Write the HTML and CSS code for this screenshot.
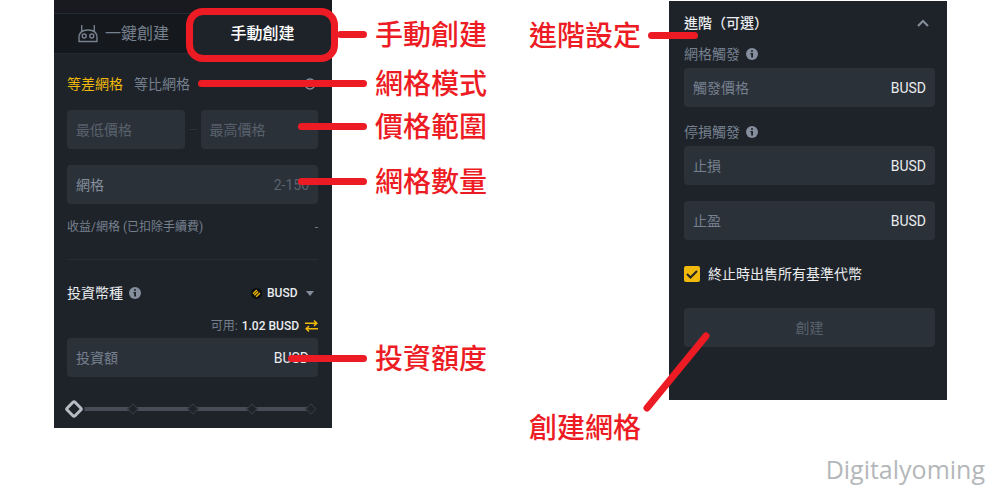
FILE: index.html
```html
<!DOCTYPE html>
<html lang="zh-Hant">
<head>
    <meta charset="UTF-8">
    <meta name="viewport" content="width=device-width, initial-scale=1.0">
    <title>網格交易設定</title>
    <link rel="stylesheet" href="styles.css">
</head>
<body>
    <main>
        <section class="side">
            <form class="panel panel-main">
                <div class="tabs">
                    <button type="button" class="tab">
                        <svg width="20" height="18" viewBox="0 0 20 18" fill="none" stroke="currentColor" stroke-width="1.4">
                            <path d="M3.700 0v7M16.300 0v7M1 16.500v-4c0-5 3.500-7.500 9-7.500s9 2.500 9 7.500v4z"/>
                            <circle cx="6.200" cy="11" r="2"/>
                            <circle cx="13.800" cy="11" r="2"/>
                        </svg>
                        一鍵創建
                    </button>
                    <button type="button" class="tab active">手動創建</button>
                </div>

                <div class="panel-body">
                    <div class="row modes">
                        <button type="button" class="mode active">等差網格</button>
                        <button type="button" class="mode">等比網格</button>
                        <svg class="push" width="16" height="12" viewBox="0 0 16 12" fill="none" stroke="#848e9c" stroke-width="1.5">
                            <circle cx="8" cy="6" r="5"/>
                        </svg>
                    </div>

                    <div class="range">
                        <div class="field dim"><input type="text" placeholder="最低價格" aria-label="最低價格"></div>
                        <span class="dash"></span>
                        <div class="field dim"><input type="text" placeholder="最高價格" aria-label="最高價格"></div>
                    </div>

                    <div class="field count">
                        <label for="grids">網格</label>
                        <input id="grids" type="text" placeholder="2-150">
                    </div>

                    <div class="row profit">
                        <span>收益/網格 (已扣除手續費)</span>
                        <span class="push">-</span>
                    </div>

                    <div class="row coin">
                        <label for="coin">投資幣種</label>
                        <svg class="info" width="12" height="12" viewBox="0 0 12 12">
                            <circle cx="6" cy="6" r="6" fill="#848e9c"/>
                            <path d="M5 2.200h2v1.600H5zM4.400 5H7v4.600H5.200V6.200h-.8z" fill="#1e2329"/>
                        </svg>
                        <svg class="push" width="11" height="11" viewBox="0 0 11 11">
                            <circle cx="5.500" cy="5.500" r="5.500" fill="#0b0e11"/>
                            <path d="M2 5.800l3.800-3.800M3.400 7.200l3.800-3.800M5.200 8.800l3.800-3.800" stroke="#f0b90b" stroke-width="1.4"/>
                        </svg>
                        <select id="coin">
                            <option>BUSD</option>
                        </select>
                        <svg class="caret" width="8" height="5" viewBox="0 0 8 5"><path d="M0 0h8L4 5z" fill="#848e9c"/></svg>
                    </div>

                    <div class="row available">
                        <span class="push">可用:</span>
                        <strong>1.02 BUSD</strong>
                        <svg width="13" height="12" viewBox="0 0 13 12" fill="none" stroke="#f0b90b" stroke-width="1.5">
                            <path d="M0 3.200h11.500M9 .5l2.800 2.700L9 5.900M13 8.800H1.500M4 6.100L1.200 8.800 4 11.500"/>
                        </svg>
                    </div>

                    <div class="field amount">
                        <input id="amount" type="text" placeholder="投資額" aria-label="投資額">
                        <label for="amount">BUSD</label>
                    </div>

                    <div class="slider">
                        <div class="ticks"><i></i><i></i><i></i><i></i><i></i></div>
                        <input type="range" min="0" max="100" value="0" aria-label="投資比例">
                    </div>
                </div>
            </form>

            <div class="notes">
                <p class="note note-tab">手動創建</p>
                <p class="note note-mode">網格模式</p>
                <p class="note note-price">價格範圍</p>
                <p class="note note-count">網格數量</p>
                <p class="note note-amount">投資額度</p>
            </div>
        </section>

        <section class="side">
            <div class="notes notes-right">
                <p class="note note-advanced">進階設定</p>
                <p class="note note-create">
                    創建網格
                    <svg width="72" height="88" viewBox="0 0 72 88"><path d="M65 8L6 80" stroke="#ed1c24" stroke-width="7" stroke-linecap="round"/></svg>
                </p>
            </div>

            <form class="panel panel-advanced">
                <div class="row advanced">
                    <h2>進階（可選）</h2>
                    <svg class="push" width="12" height="8" viewBox="0 0 12 8" fill="none" stroke="#848e9c" stroke-width="2"><path d="M1 7l5-5 5 5"/></svg>
                </div>

                <div class="row trigger">
                    <label for="trigger">網格觸發</label>
                    <svg class="info" width="12" height="12" viewBox="0 0 12 12">
                        <circle cx="6" cy="6" r="6" fill="#848e9c"/>
                        <path d="M5 2.200h2v1.600H5zM4.400 5H7v4.600H5.200V6.200h-.8z" fill="#1e2329"/>
                    </svg>
                </div>
                <div class="field">
                    <input id="trigger" type="text" placeholder="觸發價格">
                    <span>BUSD</span>
                </div>

                <div class="row trigger stop">
                    <label for="stop">停損觸發</label>
                    <svg class="info" width="12" height="12" viewBox="0 0 12 12">
                        <circle cx="6" cy="6" r="6" fill="#848e9c"/>
                        <path d="M5 2.200h2v1.600H5zM4.400 5H7v4.600H5.200V6.200h-.8z" fill="#1e2329"/>
                    </svg>
                </div>
                <div class="field">
                    <input id="stop" type="text" placeholder="止損">
                    <span>BUSD</span>
                </div>
                <div class="field profit-stop">
                    <input type="text" placeholder="止盈" aria-label="止盈">
                    <span>BUSD</span>
                </div>

                <div class="row sell">
                    <span class="check">
                        <input id="sell" type="checkbox" checked>
                        <svg width="16" height="16" viewBox="0 0 16 16" fill="none" stroke="#1e2329" stroke-width="2"><path d="M3 8l3.500 3.500L13 5"/></svg>
                    </span>
                    <label for="sell">終止時出售所有基準代幣</label>
                </div>

                <button type="button" class="create">創建</button>
            </form>
        </section>
    </main>

    <footer>Digitalyoming</footer>
</body>
</html>
```

FILE: styles.css
```css
* {
    box-sizing: border-box;
}

body {
    margin: 0;
    background-color: #fff;
    font-family: Roboto, 'Noto Sans CJK TC', sans-serif;
    font-size: 14px;
    line-height: 20px;
}

h2, p {
    margin: 0;
}

button, input, select {
    font: inherit;
    color: inherit;
    background: none;
    border: 0;
    padding: 0;
    margin: 0;
}

svg {
    flex-shrink: 0;
}

main {
    display: flex;
    justify-content: space-between;
    padding: 0 53px 0 54px;
}

.side {
    display: flex;
    align-items: flex-start;
}

/* panels */
.panel {
    width: 278px;
    background-color: #1e2329;
    color: #eaecef;
}

.panel-main {
    border-top: 13px solid #181a20;
    padding-bottom: 9px;
}

.panel-body {
    padding: 0 14px 0 13px;
}

.panel-advanced {
    margin-top: 1px;
    padding: 12px 12px 53px 15px;
}

.row {
    display: flex;
    align-items: center;
    height: 20px;
}

.push {
    margin-left: auto;
}

.info {
    margin-left: 6px;
}

.tabs {
    display: flex;
}

.tab {
    position: relative;
    flex: 1;
    display: flex;
    align-items: center;
    justify-content: center;
    gap: 7px;
    height: 41px;
    font-size: 16px;
    color: #76808f;
    background-color: #15181c;
    border-top: 1px solid #252a31;
    border-bottom: 1px solid #252a31;
}

.tab.active {
    color: #fff;
    font-weight: 500;
    background-color: #1e2329;
    border-color: #1e2329;
}

/* red frame round the open tab */
.tab.active::after {
    content: '';
    position: absolute;
    inset: -6px -6px -9px -7px;
    border: 7px solid #ed1c24;
    border-radius: 17px;
}

.modes {
    gap: 11px;
    margin-top: 20px;
}

.mode {
    color: #76808f;
}

.mode.active {
    color: #f0b90b;
}

/* fields */
.field {
    display: flex;
    align-items: center;
    height: 39px;
    padding: 0 9px;
    background-color: #2b3139;
    border-radius: 4px;
}

.field input {
    flex: 1;
    min-width: 0;
    width: 100%;
}

.field input::placeholder {
    color: #76808f;
    opacity: 1;
}

.field.dim input::placeholder,
.count input::placeholder {
    color: #59616d;
}

.range {
    display: flex;
    align-items: center;
    gap: 4px;
    margin-top: 16px;
}

.range .field {
    flex: 1;
}

.dash {
    width: 8px;
    height: 1px;
    background-color: #2b3139;
}

.count {
    margin-top: 16px;
}

.count label {
    color: #848e9c;
}

.count input {
    text-align: right;
}

.profit {
    height: 56px;
    padding-bottom: 9px;
    margin-bottom: 23px;
    border-bottom: 1px solid #292d2f;
    font-size: 12px;
    color: #76808f;
}

.coin select {
    appearance: none;
    font-size: 12px;
    font-weight: 500;
    margin-left: 5px;
}

.caret {
    margin: 0 4px 0 8px;
}

.available {
    margin-top: 13px;
    font-size: 12px;
    color: #76808f;
}

.available strong {
    margin: 0 6px 0 4px;
    font-weight: 500;
    color: #eaecef;
}

.amount {
    margin-top: 2px;
}

/* slider */
.slider {
    position: relative;
    height: 20px;
    margin-top: 22px;
    background: linear-gradient(#474d57, #474d57) center / calc(100% - 14px) 4px no-repeat;
}

.ticks {
    display: flex;
    justify-content: space-between;
    align-items: center;
    height: 20px;
    padding: 0 3px;
}

.ticks i {
    width: 8px;
    height: 8px;
    background-color: #1e2329;
    border: 1px solid #343a43;
    transform: rotate(45deg);
}

.slider input {
    appearance: none;
    position: absolute;
    inset: 0;
    width: 100%;
    height: 20px;
}

.slider input::-webkit-slider-thumb {
    appearance: none;
    width: 14px;
    height: 14px;
    background-color: #1e2329;
    border: 3px solid #b7bdc6;
    border-radius: 3px;
    box-shadow: 0 0 0 2px #1e2329;
    transform: rotate(45deg);
}

/* advanced panel */
.advanced {
    padding-right: 6px;
}

.advanced h2 {
    font-size: 14px;
    font-weight: 500;
}

.trigger {
    margin: 11px 0 4px;
    color: #76808f;
}

.stop {
    margin-top: 15px;
}

.profit-stop {
    margin-top: 16px;
}

.sell {
    gap: 8px;
    margin: 24px 0;
}

.check {
    position: relative;
    height: 16px;
}

.check input {
    appearance: none;
    display: block;
    width: 16px;
    height: 16px;
    border-radius: 2px;
    background-color: #474d57;
}

.check input:checked {
    background-color: #f0b90b;
}

.check svg {
    position: absolute;
    inset: 0;
    pointer-events: none;
}

.create {
    display: block;
    width: 100%;
    height: 39px;
    background-color: #2b3139;
    border-radius: 4px;
    color: #59616d;
}

/* red notes, each with a line to the part it names */
.notes {
    padding: 16px 0 0 43px;
}

.notes-right {
    padding: 17px 28px 0 0;
}

.note {
    position: relative;
    z-index: 1;
    font-size: 28px;
    font-weight: 500;
    line-height: 40px;
    color: #ed1c24;
    white-space: nowrap;
}

.note::before {
    position: absolute;
    top: 15px;
    right: calc(100% + 8px);
    height: 7px;
    border-radius: 4px;
    background-color: #ed1c24;
}

.notes .note:not(.note-create)::before {
    content: '';
}

.note-tab::before {
    width: 30px;
}

.note-mode {
    margin-top: 9px;
}

.note-mode::before {
    width: 169px;
}

.note-price {
    margin-top: 3px;
}

.note-price::before,
.note-count::before {
    width: 69px;
}

.note-count {
    margin-top: 15px;
}

.note-amount {
    margin-top: 137px;
}

.note-amount::before {
    width: 79px;
}

.note-advanced::before {
    left: calc(100% + 7px);
    width: 50px;
}

.note-create {
    margin-top: 352px;
}

.note-create svg {
    position: absolute;
    left: 100%;
    bottom: 33px;
}

footer {
    padding: 0 15px;
    font-family: 'Open Sans', sans-serif;
    font-size: 25px;
    line-height: 40px;
    text-align: right;
    color: #b4b7ba;
}
```
